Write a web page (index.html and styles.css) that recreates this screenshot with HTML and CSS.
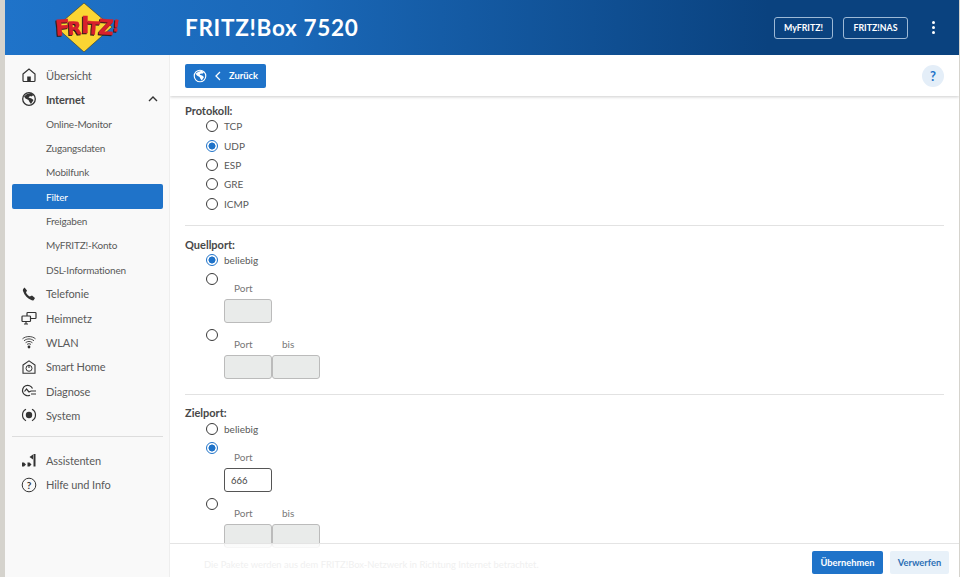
FILE: index.html
```html
<!DOCTYPE html>
<html lang="de">
<head>
    <title>FRITZ!Box 7520</title>
    <link rel="stylesheet" href="styles.css">
</head>
<body>
    <div class="page">
        <header class="header">
            <div class="logo">
                <svg width="70" height="52" viewBox="0 0 70 52">
                    <polygon points="29,3 57,27 29,52 1,27" fill="#fbd533" stroke="#3a3520" stroke-width="0.6"/>
                    <g class="logo-text">
                        <text x="1" y="36" font-size="22" transform="rotate(-5 1 36)">F</text>
                        <text x="13" y="35" font-size="18" transform="rotate(-4 13 35)">R</text>
                        <text x="26" y="33" font-size="23">I</text>
                        <text x="32" y="34" font-size="18" transform="rotate(4 32 34)">T</text>
                        <text x="43" y="34" font-size="21" transform="rotate(4 43 34)">Z</text>
                        <text x="57" y="31" font-size="16" transform="rotate(6 57 31)">!</text>
                    </g>
                </svg>
            </div>
            <div class="title">FRITZ!Box 7520</div>
            <div class="header-actions">
                <button class="outline-btn">MyFRITZ!</button>
                <button class="outline-btn wide">FRITZ!NAS</button>
                <div class="dots"><span></span><span></span><span></span></div>
            </div>
        </header>

        <div class="body-row">
            <nav class="sidebar">
                <a class="nav-item"><svg class="icon" viewBox="0 0 16 16"><path d="M2 7 8 2l6 5v6.500a1 1 0 0 1-1 1H3a1 1 0 0 1-1-1z" fill="none" stroke="#333" stroke-width="1.200"/><rect x="6.200" y="9.500" width="3.600" height="5" fill="#333"/></svg>Übersicht</a>
                <a class="nav-item nav-open"><svg class="icon" viewBox="0 0 16 16"><circle cx="8" cy="8" r="6.300" fill="none" stroke="#333" stroke-width="1.300"/><path d="M3 5.500 6 3l4-1 2.500 2-2 1.500L9 5 7.500 6.500l3 1 2 1.500-2.500 4-1.500-2-1-2-3-1.500z" fill="#333"/></svg>Internet<svg class="chevron" viewBox="0 0 10 6"><path d="M1 5 5 1l4 4" fill="none" stroke="#333" stroke-width="1.400"/></svg></a>
                <a class="nav-sub">Online-Monitor</a>
                <a class="nav-sub">Zugangsdaten</a>
                <a class="nav-sub">Mobilfunk</a>
                <a class="nav-sub nav-active">Filter</a>
                <a class="nav-sub">Freigaben</a>
                <a class="nav-sub">MyFRITZ!-Konto</a>
                <a class="nav-sub">DSL-Informationen</a>
                <a class="nav-item"><svg class="icon" viewBox="0 0 16 16"><path d="M3.500 1.500 6 4.500 5 6.500c.8 1.700 2 3 3.800 4L11 9.500l3 2.600-1.200 1.800c-.5.6-1.300.7-2 .4C6.500 12.800 3.600 9.600 2 5c-.3-.8 0-1.500.4-2.200z" fill="#333"/></svg>Telefonie</a>
                <a class="nav-item"><svg class="icon" viewBox="0 0 16 16"><g fill="none" stroke="#333" stroke-width="1.200"><rect x="6" y="2.500" width="9" height="6" rx=".8"/><rect x="1" y="6" width="8.500" height="5.500" rx=".8" fill="#f9f9f9"/><path d="M5 11.500v2.500M3 14h4"/></g></svg>Heimnetz</a>
                <a class="nav-item"><svg class="icon" viewBox="0 0 16 16"><g fill="none" stroke="#333" stroke-width=".9"><path d="M1.500 4.800C5 1.800 11 1.800 14.500 4.800"/><path d="M3 6.800C6 4.300 10 4.300 13 6.800"/><path d="M4.600 8.700C6.600 7 9.400 7 11.400 8.700"/><path d="M6 10.500C7.200 9.500 8.800 9.500 10 10.500"/></g><circle cx="8" cy="13" r="1.400" fill="#333"/></svg>WLAN</a>
                <a class="nav-item"><svg class="icon" viewBox="0 0 16 16"><path d="M2 6 8 1.800 14 6v8.200H2z" fill="none" stroke="#333" stroke-width="1.100"/><circle cx="8" cy="9.300" r="3" fill="none" stroke="#333" stroke-width="1"/><path d="M8 5.800v3.200" stroke="#333" stroke-width="1.100"/></svg>Smart Home</a>
                <a class="nav-item"><svg class="icon" viewBox="0 0 16 16"><g fill="none" stroke="#333" stroke-width="1.200"><path d="M11.500 5.500A5.200 5.200 0 1 0 9 12.200"/><path d="M3.500 8.500 5.500 6 8 9l2-1h5M10 11h5"/></g></svg>Diagnose</a>
                <a class="nav-item"><svg class="icon" viewBox="0 0 16 16"><path d="M5 2.300a6.400 6.400 0 0 0 0 11.400M11 2.300a6.400 6.400 0 0 1 0 11.400" fill="none" stroke="#333" stroke-width="1.200"/><circle cx="8" cy="8" r="3.200" fill="#333"/></svg>System</a>
                <div class="nav-divider"></div>
                <a class="nav-item"><svg class="icon" viewBox="0 0 16 16"><g fill="#333"><path d="M1 10.500h2l2 2-2 2H1z"/><path d="M6.500 10.500h2l2 2-2 2h-2z"/><path d="M8.500 5 12 2.500v5z"/><rect x="12.500" y="2" width="2" height="12.500"/></g></svg>Assistenten</a>
                <a class="nav-item"><svg class="icon" viewBox="0 0 16 16"><circle cx="8" cy="8" r="6.800" fill="none" stroke="#333" stroke-width="1"/><text x="8" y="11.500" class="help-mark">?</text></svg>Hilfe und Info</a>
            </nav>

            <main class="main">
                <div class="toolbar">
                    <button class="back-btn">
                        <svg width="14" height="14" viewBox="0 0 16 16"><circle cx="8" cy="8" r="6.600" fill="none" stroke="#fff" stroke-width="1.300"/><path d="M3 5.500 6 3l4-1 2.500 2-2 1.500L9 5 7.500 6.500l3 1 2 1.500-2.500 4-1.500-2-1-2-3-1.500z" fill="#fff"/></svg>
                        <svg class="back-arrow" width="6" height="10" viewBox="0 0 6 10"><path d="M5 1 1 5l4 4" fill="none" stroke="#fff" stroke-width="1.300"/></svg>
                        Zurück
                    </button>
                    <div class="help-btn">?</div>
                </div>

                <div class="content">
                    <section class="group">
                        <div class="group-title">Protokoll:</div>
                        <div class="radio-row"><span class="radio"></span>TCP</div>
                        <div class="radio-row"><span class="radio checked"></span>UDP</div>
                        <div class="radio-row"><span class="radio"></span>ESP</div>
                        <div class="radio-row"><span class="radio"></span>GRE</div>
                        <div class="radio-row"><span class="radio"></span>ICMP</div>
                    </section>

                    <section class="group">
                        <div class="group-title">Quellport:</div>
                        <div class="radio-row"><span class="radio checked"></span>beliebig</div>
                        <div class="port-row">
                            <span class="radio"></span>
                            <div class="port-fields">
                                <div class="port-labels"><span class="port-label">Port</span></div>
                                <div class="port-inputs"><div class="field disabled"></div></div>
                            </div>
                        </div>
                        <div class="port-row">
                            <span class="radio"></span>
                            <div class="port-fields">
                                <div class="port-labels"><span class="port-label">Port</span><span class="port-label">bis</span></div>
                                <div class="port-inputs"><div class="field disabled"></div><div class="field disabled"></div></div>
                            </div>
                        </div>
                    </section>

                    <section class="group">
                        <div class="group-title">Zielport:</div>
                        <div class="radio-row"><span class="radio"></span>beliebig</div>
                        <div class="port-row">
                            <span class="radio checked"></span>
                            <div class="port-fields">
                                <div class="port-labels"><span class="port-label">Port</span></div>
                                <div class="port-inputs"><div class="field">666</div></div>
                            </div>
                        </div>
                        <div class="port-row">
                            <span class="radio"></span>
                            <div class="port-fields">
                                <div class="port-labels"><span class="port-label">Port</span><span class="port-label">bis</span></div>
                                <div class="port-inputs"><div class="field disabled"></div><div class="field disabled"></div></div>
                            </div>
                        </div>
                    </section>
                </div>

                <footer class="footer">
                    <span class="footer-note">Die Pakete werden aus dem FRITZ!Box-Netzwerk in Richtung Internet betrachtet.</span>
                    <button class="primary-btn">Übernehmen</button>
                    <button class="light-btn">Verwerfen</button>
                </footer>
            </main>
        </div>
    </div>
</body>
</html>
```

FILE: styles.css
```css
* {
    box-sizing: border-box;
}

html, body {
    height: 100%;
}

body {
    margin: 0;
    padding: 0 1px 0 5px;
    background-color: #d5d3cd;
    font-family: Lato, "Noto Sans", sans-serif;
    font-size: 10px;
    color: #444;
    overflow: hidden;
}

.page {
    height: 100%;
    display: flex;
    flex-direction: column;
    background-color: #fff;
}

/* header */
.header {
    height: 55px;
    flex: none;
    display: flex;
    align-items: center;
    background: linear-gradient(to right, #1f73c9 0%, #1a68b8 30%, #0a427f 80%, #0a427f 100%);
    color: #fff;
}

.logo {
    width: 165px;
    height: 55px;
    display: flex;
    justify-content: center;
    align-items: flex-start;
    padding-left: 5px;
}

.logo-text {
    filter: drop-shadow(-1px 1px 0 #2a1a18);
}

.logo-text text {
    font-family: "DejaVu Sans", sans-serif;
    font-weight: bold;
    fill: #d8202c;
    stroke: #d8202c;
    stroke-width: 0.4;
}

.title {
    margin-left: 15px;
    font-size: 22.500px;
    font-weight: 700;
    letter-spacing: 0.7px;
}

.header-actions {
    margin-left: auto;
    display: flex;
    align-items: center;
    gap: 10px;
    padding-right: 21px;
}

.outline-btn {
    width: 59px;
    height: 22px;
    padding: 0;
    background: transparent;
    border: 1px solid #9db9d6;
    border-radius: 3px;
    color: #fff;
    font-family: inherit;
    font-size: 8.800px;
    font-weight: 700;
}

.outline-btn.wide {
    width: 65px;
    margin-right: 10px;
}

.dots {
    width: 10px;
    display: flex;
    flex-direction: column;
    align-items: center;
    gap: 2px;
}

.dots span {
    width: 3px;
    height: 3px;
    border-radius: 50%;
    background-color: #fff;
}

/* sidebar */
.body-row {
    flex: 1;
    min-height: 0;
    display: flex;
}

.sidebar {
    width: 165px;
    flex: none;
    padding: 8px 6px 0 7px;
    background-color: #f9f9f9;
    border-right: 1px solid #eee;
}

.nav-item, .nav-sub {
    height: 24.300px;
    display: flex;
    align-items: center;
    padding-left: 34px;
    border-radius: 2px;
    color: #5a5a5a;
}

.nav-item {
    position: relative;
    font-size: 11px;
    letter-spacing: -0.1px;
}

.nav-open {
    font-weight: 700;
    color: #484848;
}

.nav-sub {
    font-size: 10px;
    letter-spacing: -0.2px;
}

.nav-active {
    background-color: #1f73c9;
    color: #fff;
}

.icon {
    position: absolute;
    left: 9px;
    top: 4px;
    width: 16px;
    height: 16px;
}

.help-mark {
    font-size: 10px;
    font-weight: 700;
    fill: #333;
    text-anchor: middle;
}

.chevron {
    margin-left: auto;
    margin-right: 5px;
    width: 10px;
    height: 6px;
}

.nav-divider {
    height: 1px;
    margin: 9px 0 11px;
    background-color: #ddd;
}

/* main column */
.main {
    flex: 1;
    min-width: 0;
    position: relative;
    display: flex;
    flex-direction: column;
    overflow: hidden;
}

.toolbar {
    height: 41px;
    flex: none;
    display: flex;
    align-items: center;
    justify-content: space-between;
    padding: 0 15px;
    box-shadow: 0 1px 3px rgba(0, 0, 0, 0.2);
    z-index: 1;
}

.back-btn {
    width: 81px;
    height: 24px;
    display: flex;
    align-items: center;
    padding: 0 0 0 8px;
    background-color: #1f73c9;
    border: none;
    border-radius: 2px;
    color: #fff;
    font-family: inherit;
    font-size: 9.300px;
    font-weight: 700;
}

.back-arrow {
    margin: 0 8px;
}

.help-btn {
    width: 22px;
    height: 22px;
    display: flex;
    align-items: center;
    justify-content: center;
    border-radius: 50%;
    background-color: #e4eef8;
    color: #1f73c9;
    font-size: 13px;
    font-weight: 700;
}

.content {
    flex: 1;
    padding: 7.500px 15px 0;
    overflow: hidden;
}

.group {
    padding-bottom: 11.700px;
    margin-bottom: 11.500px;
    border-bottom: 1px solid #e2e2e2;
}

.group:last-child {
    border-bottom: none;
}

.group-title {
    height: 13px;
    line-height: 13px;
    font-size: 11px;
    font-weight: 700;
    color: #484848;
}

.radio-row {
    height: 19.400px;
    display: flex;
    align-items: center;
    padding-left: 21px;
    font-size: 10px;
    color: #5a5a5a;
}

.radio {
    width: 12px;
    height: 12px;
    flex: none;
    margin-right: 6px;
    border: 1.500px solid #3a3a3a;
    border-radius: 50%;
}

.radio.checked {
    border-color: #1f73c9;
    background: radial-gradient(circle, #1f73c9 0 3.200px, #fff 3.800px);
}

.port-row {
    display: flex;
    align-items: flex-start;
    padding: 3px 0 0 21px;
    margin-bottom: 3px;
}

.port-fields {
    padding-top: 9px;
}

.port-labels {
    display: flex;
    height: 17px;
}

.port-label {
    width: 48px;
    padding-left: 10px;
    line-height: 13px;
    font-size: 10px;
    color: #777;
}

.port-inputs {
    display: flex;
}

.field {
    width: 48px;
    height: 24px;
    padding-left: 6px;
    line-height: 23px;
    border: 1px solid #555;
    border-radius: 3px;
    background-color: #fff;
    font-size: 9.500px;
    color: #444;
}

.field.disabled {
    border-color: #bbb;
    background-color: #e9ebea;
}

.footer {
    position: absolute;
    left: 0;
    right: 0;
    bottom: 0;
    height: 34px;
    display: flex;
    align-items: center;
    justify-content: flex-end;
    gap: 7px;
    padding: 0 10px 0 34px;
    border-top: 1px solid #e4e4e4;
    background: linear-gradient(to bottom, rgba(255, 255, 255, 0.75), #fff 7px);
}

.footer-note {
    margin-right: auto;
    padding-top: 8px;
    font-size: 9.400px;
    color: #f0f0f0;
}

.primary-btn, .light-btn {
    height: 23px;
    margin-top: 4px;
    border: none;
    border-radius: 2px;
    font-family: inherit;
    font-size: 9.300px;
    font-weight: 700;
}

.primary-btn {
    width: 71px;
    background-color: #1f73c9;
    color: #fff;
}

.light-btn {
    width: 59px;
    background-color: #e8f1f9;
    color: #2d70b5;
}
```
